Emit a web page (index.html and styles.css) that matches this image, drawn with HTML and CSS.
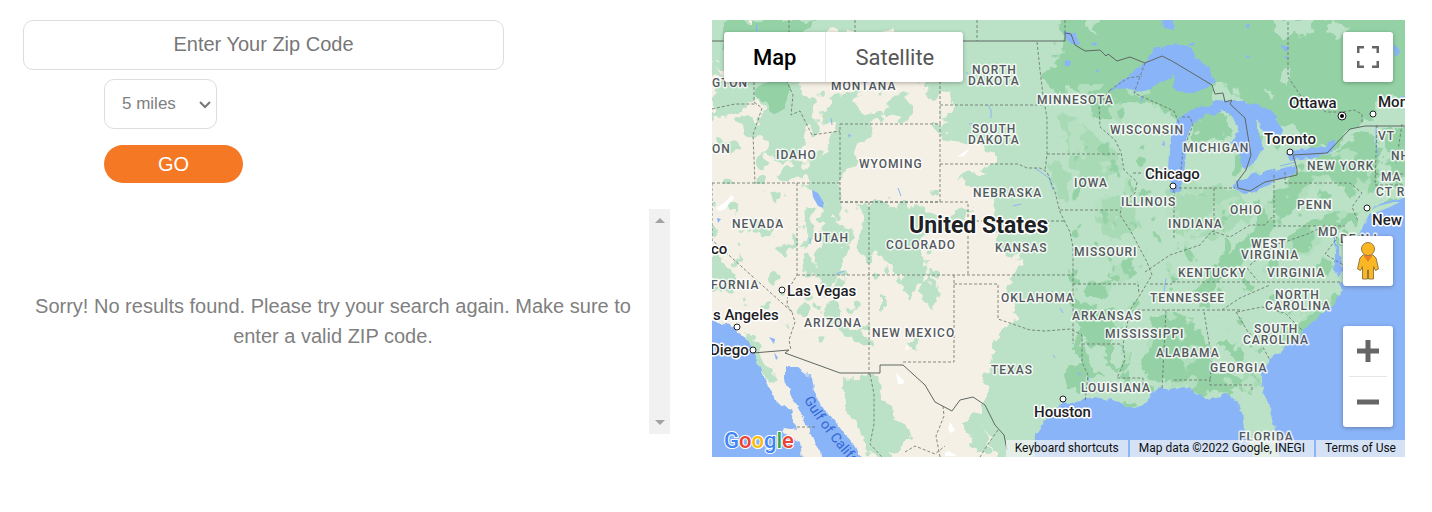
FILE: index.html
```html
<!DOCTYPE html>
<html lang="en">
<head>
<meta charset="utf-8">
<title>Store Locator</title>
<link rel="stylesheet" href="styles.css">
</head>
<body>
<main class="locator">
  <section class="panel">
    <form class="search">
      <input class="zip" type="text" aria-label="Zip code" placeholder="Enter Your Zip Code">
      <div class="radius-wrap">
        <select class="radius" aria-label="Search radius"><option>5 miles</option><option>10 miles</option><option>25 miles</option></select>
        <svg class="chevron" viewBox="0 0 12 8" aria-hidden="true"><path d="M1 1l5 5 5-5"/></svg>
      </div>
      <button class="go" type="button">GO</button>
    </form>
    <div class="results">
      <p class="message">Sorry! No results found. Please try your search again. Make sure to enter a valid ZIP code.</p>
      <div class="scrollbar" aria-hidden="true">
        <svg class="arrow" viewBox="0 0 10 5"><path d="M0 5l5-5 5 5z"/></svg>
        <svg class="arrow" viewBox="0 0 10 5"><path d="M0 0l5 5 5-5z"/></svg>
      </div>
    </div>
  </section>

  <section class="map" aria-label="Map">
    <svg class="canvas" viewBox="712 20 693 437">
      <defs>
        <filter id="rough" x="-5%" y="-5%" width="110%" height="110%" color-interpolation-filters="sRGB">
          <feTurbulence type="fractalNoise" baseFrequency=".07" numOctaves="3" seed="4"/>
          <feDisplacementMap in="SourceGraphic" scale="20" xChannelSelector="R" yChannelSelector="G"/>
        </filter>
        <filter id="coast" x="-5%" y="-5%" width="110%" height="110%" color-interpolation-filters="sRGB">
          <feTurbulence type="fractalNoise" baseFrequency=".12" numOctaves="2" seed="9"/>
          <feDisplacementMap in="SourceGraphic" scale="7" xChannelSelector="R" yChannelSelector="G"/>
        </filter>
        <filter id="specks" x="0" y="0" width="100%" height="100%" color-interpolation-filters="sRGB">
          <feTurbulence type="fractalNoise" baseFrequency=".045 .05" numOctaves="3" seed="12"/>
          <feColorMatrix values="0 0 0 0 0  0 0 0 0 0  0 0 0 0 0  30 0 0 0 -17.2" result="n"/>
          <feComposite in="SourceGraphic" in2="n" operator="in"/>
        </filter>
        <filter id="grains" x="0" y="0" width="100%" height="100%" color-interpolation-filters="sRGB">
          <feTurbulence type="fractalNoise" baseFrequency=".06 .05" numOctaves="3" seed="31"/>
          <feColorMatrix values="0 0 0 0 0  0 0 0 0 0  0 0 0 0 0  0 26 0 0 -16.6" result="n"/>
          <feComposite in="SourceGraphic" in2="n" operator="in"/>
        </filter>
      </defs>
      <rect class="sand" x="712" y="20" width="693" height="437"/>

      <g class="light">
        <path filter="url(#specks)" d="M712 41h228v83h-100v60h-128z"/>
        <path filter="url(#grains)" d="M712 190h228v100h-70v60h-60l-40-40-58-10z"/>
        <g filter="url(#rough)">
          <path d="M700 10h50v31l10 50-18 20-30 8v-20l18-24-20-20zM750 10h44v31l2 40 12 20 4 24-14 34-22 4-14-24-4-40 4-40zM794 10h150v31h-34l-20-12-24 10-30-10-40 10zM838 92l14 4 12 16 18 4-8 12-14 12-6 24-14 14-2 24-2 20 14 10-8 14v30l-16 20-6-10 4-40-4-30 2-24-20-4 8-20 18-18 4-24-16-10z"/>
          <path d="M934 0h500v480h-430l-14-40-12-20 6-18 4-34 8-22 8-18 12-16-4-16-4-14 13-14-2-10-22-11-6-12 6-20-4-12-12-10-22-10 8-10 22-6 6-10-16-10-18-6-22-4-6-12 14 2-4-16 10-12-4-6-20 6-6-30z"/>
          <path d="M858 204h24l12 4 28-2 14 12 22-8 12-4-4 18-32 8-14 10 8 22-8 22-10 14-10-16-4-16-18-14-14 8-6-22 8-16zM802 210l10-2 2 30-8 8zM816 250l12-4-6 30-10-4zM712 254l16 10 12 16-8 14-20-14zM742 330l14 8 6 16 14 22-4 6-14-14-8-16zM824 302l12 4 6 16 24 12 10 12-20-4-20-12-10-14zM843 378l28-2 12 26 14 16 12 18-8 18-24 6-14-14-6-26-12-18zM968 414l12 2 4 16 8 18-14 4-10-18zM926 280l14 8-6 18-12-6zM880 290l8 12-8 8zM912 334l8 4-2 14-6-2z"/>
        </g>
      </g>
      <g class="dark" filter="url(#rough)">
        <path d="M1062 0h370v104l-38 14-34 6-24 22-26 2-14-20-24-6-26-18-22-22-16 6 8 26-30 10-30-18-26-2-14 16-22-2-6-18-18-12-18 2-10-12 14-16z"/>
        <path d="M724 20h90l-10 12-20 12-14 8-20-6-26 8zM766 78l22 4 4 14-14 18-12-4-8-18z"/>
        <path d="M1340 145l30-12 12 24-4 32-22 10-20-16-24-2-16 26-20 18-22 26-20 22-42 34 16-36 36-32 28-40 22-22zM1120 258l14 2 4 14-16 8-14-8zM1088 284l24 2-8 12-14-2zM1076 308l42 4 6 36-10 20-20 12-18-14zM1062 368l26-6-4 24-18 6zM1148 322l24-12 30 22 8 38 28 6 20 8-2 16-26-10-28 6-22-14-30-2-10-16 12-16zM1330 318l16-16-10-10-28 18-28 24 6 14zM1300 228l36-18 26 2-26 20-40 24-12-6zM1384 128l30 0v56l-26 2zM1208 110l22 6 4 26-18-6-20 6 2-20z"/>
      </g>
      <g class="mid" filter="url(#rough)">
        <path d="M1056 114l26 6 24 26 14 16-10 18-30 4-12-30zM1052 164l14 6 2 34-10-6zM1100 190l30 10 10 30-30 10-14-24zM1180 180l60 10 10 24-30 26-40-6-20-30zM1240 365l20 4-4 30-14-6z"/>
      </g>
      <g class="dark">
        <path filter="url(#grains)" d="M1075 150l60-20 40 60 60-60 163 20v80l-60 100-80 60-20 20-90-5-70 10-10-140z"/>
      </g>
      <g class="light">
        <path filter="url(#specks)" opacity=".75" d="M1065 84h80l40 60h160l50 30-20 40-50 110-80 70-120-10-50-160z"/>
        <path filter="url(#rough)" d="M1272 20h46l-10 14-24 6zM1328 20l26 8-6 8-20-4zM1080 20h14l2 10zM1282 66l10 6-4 14-8-8zM1262 92h12l-2 8zM1256 168l30-22 4 12-24 14zM1370 112l24-18 12 8v14l-24 8zM1084 340l12 6 22 30 4 18-18-10zM1206 346l22 2 8 20-18-4zM1246 398l18 14 8 44h-14l-6-24zM1112 330l12 4-4 30-8-2zM1262 312l20 4 6 12-18 2z"/>
      </g>

      <g class="water">
        <g filter="url(#coast)">
          <path d="M700 320l30 5 12 10 10 12 5 15 8 18 10 20 15 10 7 20-12-2-2 5 17 9 5 28h-105z"/>
          <path d="M785 367l13 0 14 11 3 17 5 10 10 10 10 13 12 13 18 30-46-10-10-22-10-20-12-22-7-16z"/>
          <path d="M1032 470l3-35 10-15 15-15 20-5 15-3 15 3 15 6 10 2 12-5 3-11 10-4 10 2 15-3 15 8 10 5 15-7 10 7 8 12 2 18 12 40z"/>
          <path d="M1420 194l-30 8-17 5-8 15-7 18-8 15-5 15-5 15 2 8-7 12-15 10-15 13-15 17-18 13-10 14v13l8 25 5 20 5 40h140z"/>
          <path d="M1110 90l22-17 13-11 9-12 18-7 18 2 10 18 10 4 5 15-10 6-13 6-13-2-7-4 2-14-21 13-15 6-9-5z"/>
          <path d="M1172 130l12-17 16-6 15-2 8 7-18 3-12 10-6 15-2 25-5 26-8 2-4-18 1-25z"/>
          <path d="M1213 100l22 1 27 5 13 8 8 16-2 7-17-6-8-12 3 16 4 14-8 12-8 8-5-4-3-14-8-8 8-12-9-18-18-7z"/>
          <path d="M1233 184l12-7 20-5 32-7-2 9-20 6-17 11-13 3-12-6z"/>
          <path d="M1285 155l10-5 30-3 10-9v10l-15 9-30 3z"/>
          <path d="M1333 234l5 12 4 14-2 18-5-10v-16z"/>
          <path d="M1063 30l12 3 4 10-8 0-8-6zM1160 20h14v10l-10-2zM1392 46l8 4-6 6z"/>
        </g>
        <path d="M812 190l6 3 6 10-1 5-5-2-5-9zM769 337l6 2-1 5zM774 352l4 6-2 2zM756 22l2 8-2 2zM717 218l4 1-3 4zM1065 60l6 1-1 5-5 0zM1090 44l6-2 1 4zM1140 96l3 2-1 6zM1162 145l2-5 1 6zM1095 70l4 0-1 3zM1187 45l8-3-2 4zM1245 25l5-1-2 5zM1280 45l9 2-3 5zM1284 56l5 1-3 2zM1245 55l6 2-4 1zM1076 372l5 2-1 2zM1088 376l2 6-3-3zM848 134l3 1-2 3zM1398 98l6-2v2z"/>
        <path class="river" d="M831 118l1 7M969 124h7M988 105l3 5v8M966 72l4 4M1011 80l4-3M1035 168l14 10 4 12M1013 206l8-2M1376 126v18l2 12M1053 355l2 3M836 274l8-3M810 238v6M898 188l3 8M1060 308l3 5M1166 278l-2 14M1280 166l16-4M1352 262l-4 12"/>
      </g>
      <path class="land" d="M1368 212l10-6 16-4 6 0-10 5-18 7z"/>
      <path class="salt" d="M732 195l2 3-10 12-5 1-3-3 8-5zM970 148l-6 8-7 1zM896 373l8 8-1 3-5 0zM907 345l2 5-4-1zM950 422l5 8-4 3-3-4zM945 453l4-2 8 5h-12z"/>

      <g class="state-lines">
        <path d="M754 82v20l8 6-9 27 2 48M712 109l23-5h22M712 183h128M789 20v21l-2 41 6 13-2 20 9-4 12 24 28-4M840 124h100v78H840zM797 183v92l-9 15-1 15 5 7M712 183v57l80 72 3 10-6 18 2 10M797 275h276M869 202v173M840 202h128v19h97M977 20v21M855 20v21M1065 20v15M940 41v83M940 105h104M940 164h78l9 4 13 0 7 4 8 20 5 20 10 20 3 15v97M1037 42l3 28 3 25 4 23v37l-2 15M1047 154h75M1110 90l-11 15 1 22 15 13 6 12 3 18 13 12-2 11-13 10-2 12 10 15 17 32 5 13-12 20-10 15-7 35 2 15-8 18h26v12M1060 210h58M968 221v54M954 275v87h-51M954 284h44v35l32 11 15 1 25-2 12 6v27l6 13-3 27M1082 344h40M1073 284h65l1 10M1150 284h22M1137 310h103M1172 282h168M1222 310l18-12 30-13M1166 310l-4 80M1204 312l8 48-2 20M1174 380h36l0 5h42v5M1236 312l12 20 12 10 10 18M1237 312l25-5 23 6 17 17M1174 190v50M1214 188v47M1174 188h61M1274 175v51h71M1285 172v11h65l12 10-10 14 6 14M1145 272l25-17 30-10 12-14 18 6 20-12 15 0 9-10M1250 265l25-20 30-10 20-9 12 12-12 16 20 12M1247 268l10 12M1133 173h8M1145 63l-11 30 18 8 22 10 8 20M1110 90l18-12 14-2M1182 117l8 0 3 8-10 25-3 30M1288 22v55l12 18 26 17 16 0 12-2 8 4 0 10M1377 125l-2 60h30M1375 174h30M1402 124l-6 40M943 406l1 10-8 20 4 21M870 374l4 20v30l-4 20 12 13M905 452l10-6 20 8 10-8M998 430l-10 14-8 13M797 427h18"/>
      </g>
      <g class="borders">
        <path d="M712 41h353v-8l6 1 4 11 10 6 15-1 6 6 2-2 9 7 13-4 15 6 17-7 10 5 40 24 3 9 8-1 2 9 7-2-2 4 15 14 6 37-5 15-9 12 1 6 12 3 15-9 32-7v-6l-4-14 34-2 23-24 15-3h40"/>
        <path d="M753 353l36-3-4 3 55 20h40v-8h23l22 20 10 17 17 9 8-11 13-3 12 8 10 20 9 10 3 15"/>
      </g>

      <g class="state">
        <text x="712" y="87">GTON</text><text x="831" y="90">MONTANA</text><text x="712" y="153">ON</text>
        <text x="776" y="159">IDAHO</text><text x="859" y="168">WYOMING</text>
        <text x="972" y="74">NORTH</text><text x="968" y="85">DAKOTA</text><text x="972" y="133">SOUTH</text><text x="968" y="144">DAKOTA</text>
        <text x="1037" y="104">MINNESOTA</text><text x="1110" y="134">WISCONSIN</text><text x="1183" y="152">MICHIGAN</text>
        <text x="973" y="197">NEBRASKA</text><text x="1074" y="187">IOWA</text><text x="1121" y="206">ILLINOIS</text>
        <text x="1168" y="228">INDIANA</text><text x="1230" y="214">OHIO</text><text x="1297" y="209">PENN</text><text x="1307" y="170">NEW YORK</text>
        <text x="1378" y="140">VT</text><text x="1391" y="160">NH</text><text x="1381" y="181">MA</text><text x="1376" y="196">CT RI</text><text x="1318" y="236">MD</text><text x="1340" y="243">DE NJ</text>
        <text x="732" y="228">NEVADA</text><text x="814" y="242">UTAH</text><text x="886" y="249">COLORADO</text><text x="995" y="252">KANSAS</text><text x="1074" y="256">MISSOURI</text>
        <text x="1251" y="248">WEST</text><text x="1241" y="259">VIRGINIA</text><text x="1178" y="277">KENTUCKY</text><text x="1267" y="277">VIRGINIA</text>
        <text x="1150" y="302">TENNESSEE</text><text x="1275" y="299">NORTH</text><text x="1265" y="310">CAROLINA</text><text x="1254" y="333">SOUTH</text><text x="1243" y="344">CAROLINA</text>
        <text x="711" y="289">FORNIA</text><text x="804" y="327">ARIZONA</text><text x="872" y="337">NEW MEXICO</text><text x="1001" y="302">OKLAHOMA</text><text x="1072" y="320">ARKANSAS</text>
        <text x="1105" y="338">MISSISSIPPI</text><text x="1156" y="357">ALABAMA</text><text x="1210" y="372">GEORGIA</text><text x="991" y="374">TEXAS</text><text x="1081" y="392">LOUISIANA</text><text x="1239" y="441">FLORIDA</text>
      </g>
      <g class="city">
        <text x="1289" y="108">Ottawa</text><text x="1378" y="107">Montreal</text><text x="1264" y="144">Toronto</text><text x="1145" y="179">Chicago</text><text x="1372" y="225">New</text>
        <text x="787" y="296">Las Vegas</text><text x="713" y="320">s Angeles</text><text x="710" y="355">Diego</text><text x="711" y="254">co</text><text x="1034" y="417">Houston</text>
      </g>
      <g class="pins">
        <circle cx="1342" cy="116" r="4"/><circle cx="1373" cy="114" r="3"/><circle cx="1290" cy="152" r="3"/><circle cx="1173" cy="186" r="3"/><circle cx="1367" cy="208" r="3"/><circle cx="782" cy="290" r="3"/><circle cx="737" cy="327" r="3"/><circle cx="753" cy="350" r="3"/><circle cx="1063" cy="399" r="3"/>
      </g>
      <circle cx="1342" cy="116" r="2"/>
      <text class="country" x="909" y="233">United States</text>
      <path id="gulf" fill="none" d="M804 400q22 38 66 83"/>
      <text class="sea"><textPath href="#gulf">Gulf of California</textPath></text>
      <text class="logo" x="724" y="448"><tspan class="b">G</tspan><tspan class="r">o</tspan><tspan class="y">o</tspan><tspan class="b">g</tspan><tspan class="g">l</tspan><tspan class="r">e</tspan></text>
    </svg>

    <div class="types control">
      <button class="type active" type="button">Map</button>
      <button class="type" type="button">Satellite</button>
    </div>
    <button class="fullscreen control" type="button" aria-label="Toggle fullscreen">
      <svg viewBox="0 0 22 22"><path d="M1 7V1h6M15 1h6v6M21 15v6h-6M7 21H1v-6"/></svg>
    </button>
    <div class="nav">
      <button class="pegman control" type="button" aria-label="Street View">
        <svg viewBox="0 0 22 38">
          <path class="body" d="M6 13l-3 3-2.500 11 3 1.500 2-4V37h5v-9h1v9h5V24.500l2 4 3-1.500L19 16l-3-3z"/>
          <path class="scarf" d="M6 13h10l-5 7z"/>
          <circle class="head" cx="11" cy="7" r="6.500"/>
        </svg>
      </button>
      <div class="zoom control">
        <button class="step" type="button" aria-label="Zoom in"><svg viewBox="0 0 22 22"><path d="M0 11h22M11 0v22"/></svg></button>
        <button class="step" type="button" aria-label="Zoom out"><svg viewBox="0 0 22 22"><path d="M0 11h22"/></svg></button>
      </div>
    </div>
    <div class="credits">
      <button class="credit" type="button">Keyboard shortcuts</button>
      <span class="credit">Map data ©2022 Google, INEGI</span>
      <a class="credit" href="#">Terms of Use</a>
    </div>
  </section>
</main>
</body>
</html>
```
FILE: styles.css
```css
* { box-sizing: border-box; }
body { margin: 0; background: #fff; color: #808080; font-family: "Liberation Sans", Arial, sans-serif; }
button, input, select { font: inherit; }
button { border: 0; padding: 0; cursor: pointer; }

.locator { display: grid; grid-template-columns: 647fr 693fr; gap: 42px; align-items: start; padding: 20px 27px 55px 23px; }

.search { display: flex; flex-direction: column; align-items: flex-start; }
.zip { width: 481px; max-width: 100%; height: 50px; padding: 0 2px 2px; border: 1px solid #ddd; border-radius: 10px; text-align: center; font-size: 20px; color: #777; }
.zip::placeholder { color: #777; opacity: 1; }
.radius-wrap { position: relative; margin: 9px 0 16px 81px; }
.radius { display: block; appearance: none; width: 113px; height: 50px; padding: 0 17px 2px; border: 1px solid #ddd; border-radius: 10px; background: #fff; color: #808080; font-size: 17px; }
.chevron { position: absolute; right: 6px; top: 22px; width: 12px; height: 8px; fill: none; stroke: #777; stroke-width: 2; pointer-events: none; }
.go { width: 139px; height: 38px; margin-left: 81px; border-radius: 19px; background: #f57825; color: #fff; font-size: 20px; }

.results { display: flex; height: 225px; margin-top: 26px; }
.message { flex: 1; margin: 0; padding: 82px 6px 0 0; text-align: center; font-size: 20px; line-height: 30px; }
.scrollbar { display: flex; flex-direction: column; justify-content: space-between; align-items: center; width: 21px; padding: 9px 0; background: #f1f1f1; }
.arrow { width: 10px; height: 5px; fill: #a3a3a3; }

.map { position: relative; overflow: hidden; font-family: Roboto, Arial, sans-serif; }
.canvas { display: block; width: 100%; height: auto; }
.sand { fill: #f5f0e5; }
.light, .land { fill: #bbe2c6; }
.mid { fill: #a8dab5; }
.dark { fill: #94d2a5; }
.water { fill: #8ab4f8; }
.river { fill: none; stroke: #8ab4f8; }
.salt { fill: #fff; }
.state-lines { fill: none; stroke: #657068; stroke-dasharray: 3 2; opacity: .8; }
.borders { fill: none; stroke: #5f6863; }
.state, .city, .country, .sea, .logo { paint-order: stroke; stroke: #fff; stroke-linejoin: round; }
.state { font-size: 12px; font-weight: 500; letter-spacing: 1px; fill: #55595d; stroke-width: 3px; stroke-opacity: .8; }
.city { font-size: 15px; font-weight: 500; fill: #202124; stroke-width: 3px; }
.country { font-size: 23px; font-weight: 700; fill: #202124; stroke-width: 3px; }
.sea { font-size: 14px; fill: #3367d6; stroke: none; }
.pins { fill: #fff; stroke: #202124; stroke-width: 1px; }
.logo { font-size: 22px; font-weight: 500; stroke-width: 2px; }
.b { fill: #4285f4; }
.r { fill: #ea4335; }
.y { fill: #fbbc05; }
.g { fill: #34a853; }

.control { background: #fff; border-radius: 3px; box-shadow: 0 1px 4px rgba(0, 0, 0, .3); }
.types { position: absolute; top: 12px; left: 12px; display: flex; }
.type { height: 50px; padding: 0 29px; background: none; color: #565656; font-size: 22px; }
.type.active { border-right: 1px solid #e6e6e6; color: #000; font-weight: 500; }
.fullscreen { position: absolute; top: 12px; right: 12px; display: grid; place-items: center; width: 50px; height: 50px; }
.fullscreen svg { width: 22px; height: 22px; fill: none; stroke: #666; stroke-width: 3; }
.nav { position: absolute; right: 12px; bottom: 30px; display: flex; flex-direction: column; gap: 40px; }
.pegman { display: grid; place-items: center; width: 50px; height: 50px; }
.pegman svg { width: 22px; height: 38px; }
.body, .head { fill: #fbb723; stroke: #937a45; stroke-width: 1; }
.scarf { fill: #e8832a; }
.zoom { display: flex; flex-direction: column; align-items: center; width: 50px; }
.step { display: grid; place-items: center; width: 38px; height: 50px; background: none; }
.step + .step { height: 51px; border-top: 1px solid #e6e6e6; }
.step svg { width: 22px; height: 22px; fill: none; stroke: #666; stroke-width: 5; }
.credits { position: absolute; right: 0; bottom: 0; display: flex; gap: 2px; }
.credit { height: 17px; padding: 0 9px; background: rgba(245, 245, 245, .7); color: #111; font-size: 12px; line-height: 17px; text-decoration: none; white-space: nowrap; }
```
